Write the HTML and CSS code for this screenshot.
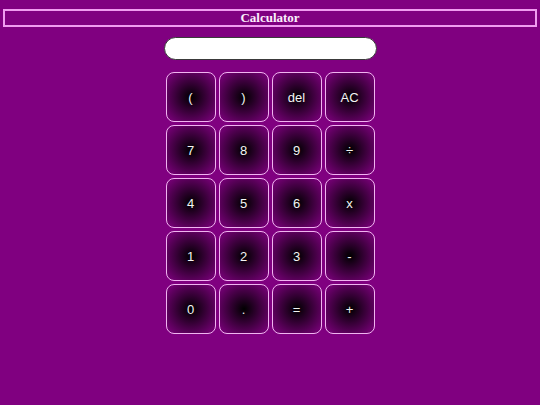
FILE: index.html
```html
<!DOCTYPE html>
<html lang="en">
<head>
  <meta charset="UTF-8">
  <title>Calculator</title>
  <link rel="stylesheet" href="styles.css">
</head>
<body>
<h1 class="title">Calculator</h1>
<input type="text" id="display" class="display">
<div class="keys">
  <button class="key">(</button>
  <button class="key">)</button>
  <button class="key">del</button>
  <button class="key">AC</button>
  <button class="key">7</button>
  <button class="key">8</button>
  <button class="key">9</button>
  <button class="key">&divide;</button>
  <button class="key">4</button>
  <button class="key">5</button>
  <button class="key">6</button>
  <button class="key">x</button>
  <button class="key">1</button>
  <button class="key">2</button>
  <button class="key">3</button>
  <button class="key">-</button>
  <button class="key">0</button>
  <button class="key">.</button>
  <button class="key">=</button>
  <button class="key">+</button>
</div>
</body>
</html>
```

FILE: styles.css
```css
body {
  margin: 0;
  padding: 9px 3px 0;
  background-color: #800080;
}

.title {
  margin: 0;
  border: 2px solid #f09cf0;
  color: #fbeefb;
  font: bold 13px/14px "Liberation Serif", serif;
  text-align: center;
}

.display {
  display: block;
  box-sizing: border-box;
  width: 213px;
  height: 23px;
  margin: 10px auto 0;
  padding: 0 10px;
  background: #fff;
  border: 1px solid #3a3a3a;
  border-radius: 12px;
  outline: none;
}

.keys {
  display: grid;
  grid-template-columns: repeat(4, 50px);
  grid-auto-rows: 50px;
  gap: 3px;
  justify-content: center;
  margin-top: 12px;
}

.key {
  padding: 0;
  border: 1px solid #f0b4f0;
  border-radius: 8px;
  background: radial-gradient(#000, #800080);
  color: #f4f4f4;
  font: 13px "Liberation Sans", Arial, sans-serif;
  cursor: pointer;
}
```
